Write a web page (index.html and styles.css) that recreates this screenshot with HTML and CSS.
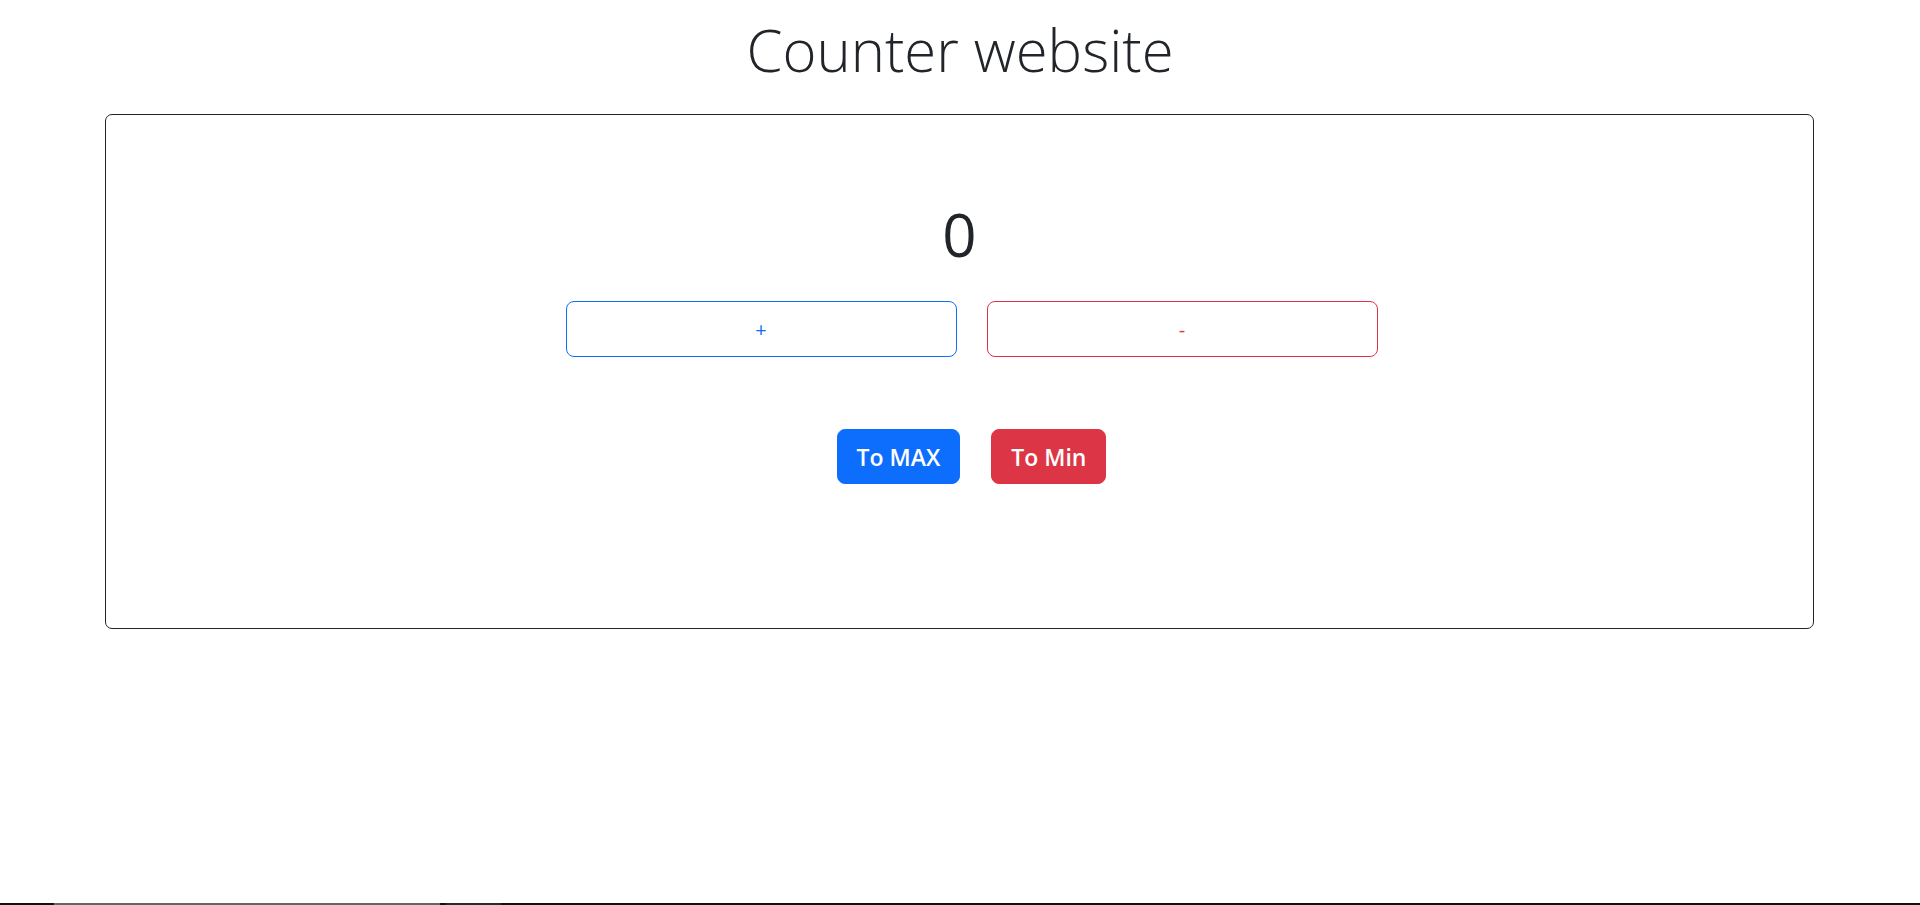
FILE: index.html
```html
<!DOCTYPE html>
<html lang="en">
<head>
<meta charset="utf-8">
<title>Counter website</title>
<link rel="stylesheet" href="styles.css">
</head>
<body>
  <h1 class="title">Counter website</h1>
  <main class="card">
    <div class="count">0</div>
    <div class="step-row">
      <button class="btn btn-outline-primary">+</button>
      <button class="btn btn-outline-danger">-</button>
    </div>
    <div class="jump-row">
      <button class="btn btn-primary">To MAX</button>
      <button class="btn btn-danger">To Min</button>
    </div>
  </main>
  <div class="scrollbar">
    <span class="sb-end"></span>
    <span class="sb-thumb"></span>
    <span class="sb-gap"></span>
    <span class="sb-dark"></span>
  </div>
</body>
</html>
```

FILE: styles.css
```css
* { box-sizing: border-box; }

html, body {
  margin: 0;
  padding: 0;
  background: #fff;
}

body {
  font-family: "Open Sans", "Noto Sans", sans-serif;
  color: #212529;
  height: 905px;
  overflow: hidden;
}

.title {
  margin: 14px 0 28px;
  font-size: 58px;
  line-height: 72px;
  font-weight: 300;
  text-align: center;
  color: #212529;
}

.card {
  margin: 0 106px 0 105px;
  height: 515px;
  border: 1px solid #212529;
  border-radius: 7px;
  padding-top: 81px;
  display: flex;
  flex-direction: column;
  align-items: center;
}

.count {
  font-size: 60px;
  line-height: 77px;
  font-weight: 400;
  color: #212529;
}

.step-row {
  margin-top: 28px;
  display: flex;
  gap: 30px;
  padding-left: 24px;
}

.jump-row {
  margin-top: 72px;
  display: flex;
  gap: 31px;
  padding-left: 24px;
}

.btn {
  font-family: inherit;
  cursor: pointer;
  border-radius: 8px;
  background: #fff;
  display: flex;
  align-items: center;
  justify-content: center;
}

.btn-outline-primary,
.btn-outline-danger {
  width: 391px;
  height: 56px;
  font-size: 20px;
  font-weight: 400;
  padding: 0;
}

.btn-outline-primary {
  border: 1px solid #0d6efd;
  color: #0d6efd;
}

.btn-outline-danger {
  border: 1px solid #dc3545;
  color: #dc3545;
}

.btn-primary,
.btn-danger {
  height: 55px;
  padding: 0 19px;
  font-size: 23px;
  font-weight: 600;
  color: #fff;
  border: 1px solid transparent;
}

.btn-primary { background: #0d6efd; border-color: #0d6efd; }
.btn-danger { background: #dc3545; border-color: #dc3545; }

.scrollbar {
  position: fixed;
  left: 0;
  right: 0;
  bottom: 0;
  height: 2px;
  background: #111;
  display: flex;
}

.sb-end { width: 54px; background: #111; }
.sb-thumb { width: 386px; background: #666; }
.sb-gap { width: 6px; background: #111; }
.sb-dark { width: 55px; background: #2a2a2a; }
```
